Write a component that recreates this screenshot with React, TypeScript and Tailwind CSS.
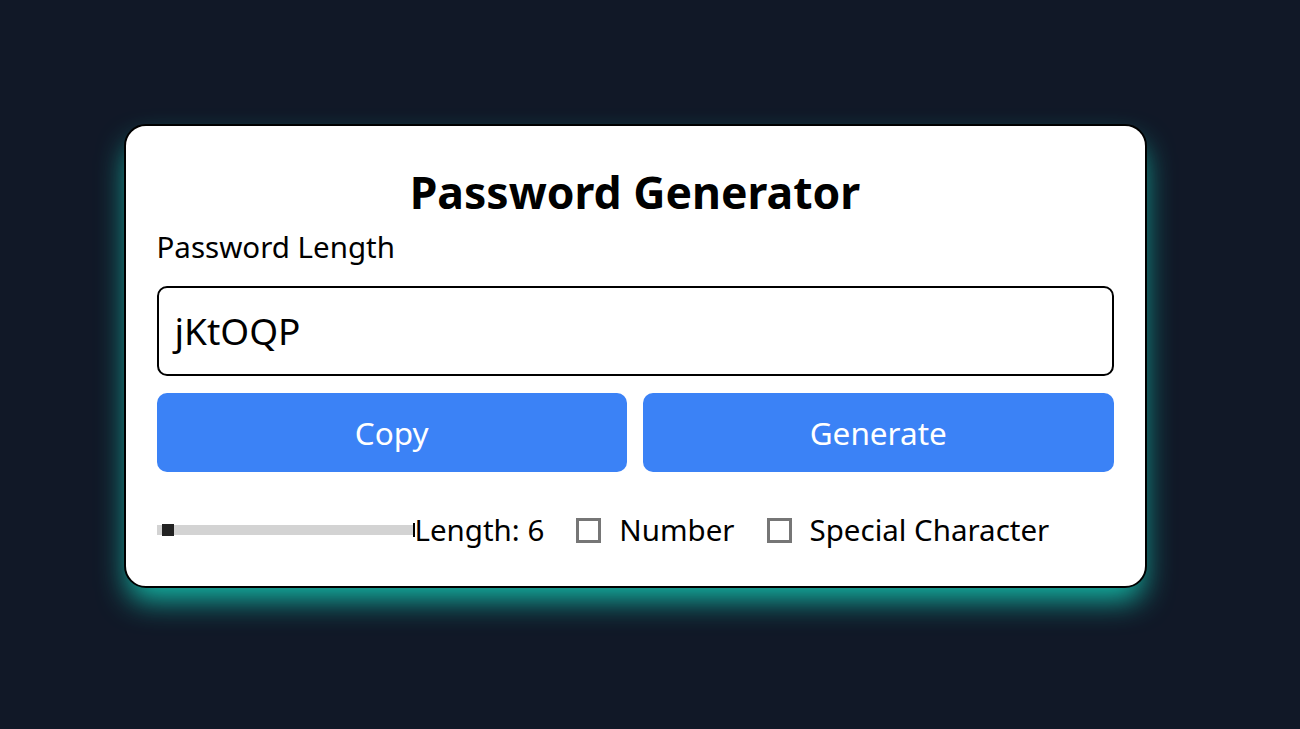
import { useState } from "react";

function Checkbox({ label }: { label: string }) {
  return (
    <label className="flex items-center gap-[18px]">
      <span className="block h-[25px] w-[25px] border-[3px] border-[#767676] bg-white" />
      <span>{label}</span>
    </label>
  );
}

export default function App() {
  const [password] = useState("jKtOQP");

  return (
    <div
      className="flex h-[729px] w-full items-start justify-center bg-[#111827] pr-[30px] pt-[124px]"
      style={{ fontFamily: '"Noto Sans", "Open Sans", sans-serif' }}
    >
      <div className="flex w-[1023px] flex-col rounded-[22px] border-2 border-black bg-white px-[31px] pb-[36px] pt-[36px] shadow-[0_16px_30px_-4px_rgba(20,184,166,1)]">
        <h1 className="text-center text-[44.5px] font-bold leading-[60px] text-black">
          Password Generator
        </h1>
        <label className="mt-[5px] text-[29.5px] leading-[40px] text-black">
          Password Length
        </label>

        <div className="mt-[19px] flex h-[90px] items-center rounded-[10px] border-2 border-black px-[16px]">
          <span className="text-[37px] text-black">{password}</span>
        </div>

        <div className="mt-[17px] grid grid-cols-2 gap-[16px]">
          <button className="h-[79px] rounded-[10px] bg-[#3b82f6] text-[31.5px] text-white">
            Copy
          </button>
          <button className="h-[79px] rounded-[10px] bg-[#3b82f6] text-[31.5px] text-white">
            Generate
          </button>
        </div>

        <div className="mt-[38px] flex items-center text-[29.5px] leading-[40px] text-black">
          <div className="relative flex h-[14px] w-[258px] items-center">
            <div className="h-[10px] w-full bg-[#d3d3d3]" />
            <div className="absolute left-[5px] h-[12px] w-[12px] bg-[#222]" />
            <div className="absolute right-0 h-[14px] w-[2px] bg-black" />
          </div>
          <span className="mr-[32px]">Length: 6</span>
          <div className="mr-[32px]">
            <Checkbox label="Number" />
          </div>
          <Checkbox label="Special Character" />
        </div>
      </div>
    </div>
  );
}
